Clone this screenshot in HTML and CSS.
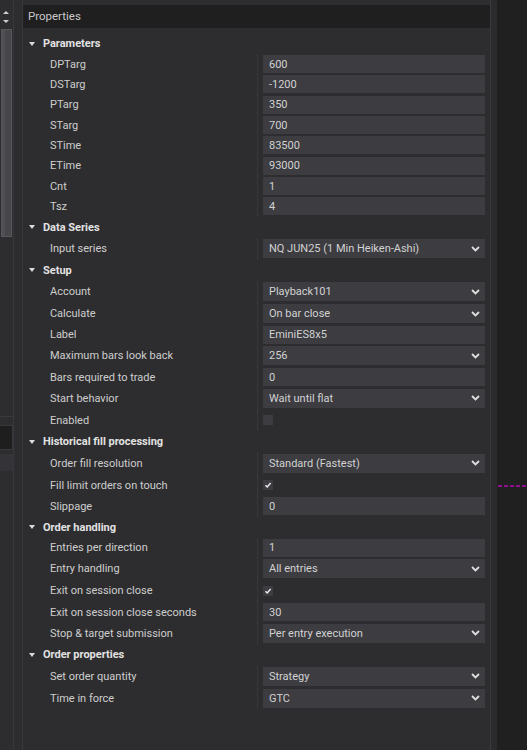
FILE: index.html
```html
<!DOCTYPE html>
<html>
<head>
<meta charset="utf-8">
<link rel="stylesheet" href="styles.css">
</head>
<body>
<div class="app">
  <div class="leftstrip">
    <div class="arrows">
      <span class="arr up"></span>
      <span class="arr down"></span>
    </div>
    <div class="track"><div class="thumb"></div></div>
    <div class="stripfill"></div>
    <div class="darkblock"></div>
    <div class="lightband"></div>
    <div class="stripbottom"></div>
  </div>
  <div class="gap"></div>
  <div class="panel">
    <div class="header">Properties</div>
    <div class="tree">
      <div class="row cat"><span class="tri"></span><span class="cname">Parameters</span></div>
      <div class="row text"><span class="lbl">DPTarg</span><span class="val"><span class="box">600</span></span></div>
      <div class="row text"><span class="lbl">DSTarg</span><span class="val"><span class="box">-1200</span></span></div>
      <div class="row text"><span class="lbl">PTarg</span><span class="val"><span class="box">350</span></span></div>
      <div class="row text"><span class="lbl">STarg</span><span class="val"><span class="box">700</span></span></div>
      <div class="row text"><span class="lbl">STime</span><span class="val"><span class="box">83500</span></span></div>
      <div class="row text"><span class="lbl">ETime</span><span class="val"><span class="box">93000</span></span></div>
      <div class="row text"><span class="lbl">Cnt</span><span class="val"><span class="box">1</span></span></div>
      <div class="row text"><span class="lbl">Tsz</span><span class="val"><span class="box">4</span></span></div>

      <div class="row cat"><span class="tri"></span><span class="cname">Data Series</span></div>
      <div class="row combo"><span class="lbl">Input series</span><span class="val"><span class="box">NQ JUN25 (1 Min Heiken-Ashi)<svg class="chev" width="9" height="6" viewBox="0 0 9 6"><polyline points="1,1 4.5,4.5 8,1"/></svg></span></span></div>

      <div class="row cat"><span class="tri"></span><span class="cname">Setup</span></div>
      <div class="row combo"><span class="lbl">Account</span><span class="val"><span class="box">Playback101<svg class="chev" width="9" height="6" viewBox="0 0 9 6"><polyline points="1,1 4.5,4.5 8,1"/></svg></span></span></div>
      <div class="row combo"><span class="lbl">Calculate</span><span class="val"><span class="box">On bar close<svg class="chev" width="9" height="6" viewBox="0 0 9 6"><polyline points="1,1 4.5,4.5 8,1"/></svg></span></span></div>
      <div class="row text"><span class="lbl">Label</span><span class="val"><span class="box">EminiES8x5</span></span></div>
      <div class="row combo"><span class="lbl">Maximum bars look back</span><span class="val"><span class="box">256<svg class="chev" width="9" height="6" viewBox="0 0 9 6"><polyline points="1,1 4.5,4.5 8,1"/></svg></span></span></div>
      <div class="row text"><span class="lbl">Bars required to trade</span><span class="val"><span class="box">0</span></span></div>
      <div class="row combo"><span class="lbl">Start behavior</span><span class="val"><span class="box">Wait until flat<svg class="chev" width="9" height="6" viewBox="0 0 9 6"><polyline points="1,1 4.5,4.5 8,1"/></svg></span></span></div>
      <div class="row check"><span class="lbl">Enabled</span><span class="val"><span class="cb"></span></span></div>

      <div class="row cat"><span class="tri"></span><span class="cname">Historical fill processing</span></div>
      <div class="row combo"><span class="lbl">Order fill resolution</span><span class="val"><span class="box">Standard (Fastest)<svg class="chev" width="9" height="6" viewBox="0 0 9 6"><polyline points="1,1 4.5,4.5 8,1"/></svg></span></span></div>
      <div class="row check"><span class="lbl">Fill limit orders on touch</span><span class="val"><span class="cb"><svg width="10" height="10" viewBox="0 0 10 10"><polyline points="2.5,5.2 4.2,7 7.6,3"/></svg></span></span></div>
      <div class="row text"><span class="lbl">Slippage</span><span class="val"><span class="box">0</span></span></div>

      <div class="row cat"><span class="tri"></span><span class="cname">Order handling</span></div>
      <div class="row text"><span class="lbl">Entries per direction</span><span class="val"><span class="box">1</span></span></div>
      <div class="row combo"><span class="lbl">Entry handling</span><span class="val"><span class="box">All entries<svg class="chev" width="9" height="6" viewBox="0 0 9 6"><polyline points="1,1 4.5,4.5 8,1"/></svg></span></span></div>
      <div class="row check"><span class="lbl">Exit on session close</span><span class="val"><span class="cb"><svg width="10" height="10" viewBox="0 0 10 10"><polyline points="2.5,5.2 4.2,7 7.6,3"/></svg></span></span></div>
      <div class="row text"><span class="lbl">Exit on session close seconds</span><span class="val"><span class="box">30</span></span></div>
      <div class="row combo"><span class="lbl">Stop &amp; target submission</span><span class="val"><span class="box">Per entry execution<svg class="chev" width="9" height="6" viewBox="0 0 9 6"><polyline points="1,1 4.5,4.5 8,1"/></svg></span></span></div>

      <div class="row cat"><span class="tri"></span><span class="cname">Order properties</span></div>
      <div class="row combo"><span class="lbl">Set order quantity</span><span class="val"><span class="box">Strategy<svg class="chev" width="9" height="6" viewBox="0 0 9 6"><polyline points="1,1 4.5,4.5 8,1"/></svg></span></span></div>
      <div class="row combo"><span class="lbl">Time in force</span><span class="val"><span class="box">GTC<svg class="chev" width="9" height="6" viewBox="0 0 9 6"><polyline points="1,1 4.5,4.5 8,1"/></svg></span></span></div>
    </div>
  </div>
  <div class="rstrip"></div>
  <div class="chart">
    <svg class="dash" width="29" height="2" viewBox="0 0 29 2"><line x1="0" y1="1" x2="29" y2="1"/></svg>
  </div>
</div>
</body>
</html>
```

FILE: styles.css
```css
html, body {
  margin: 0;
  padding: 0;
  background: #2d2d30;
}
body {
  font-family: Roboto, "Noto Sans", sans-serif;
  font-size: 11px;
  color: #cfcfcf;
}
.app {
  display: flex;
  width: 527px;
  height: 750px;
  overflow: hidden;
}
.leftstrip {
  width: 13px;
  border-right: 1px solid #38383c;
  display: flex;
  flex-direction: column;
  padding-top: 5px;
  box-sizing: content-box;
}
.arrows {
  height: 24px;
  display: flex;
  flex-direction: column;
  align-items: center;
  justify-content: center;
  gap: 6px;
}
.arr {
  width: 0;
  height: 0;
  border-left: 3px solid transparent;
  border-right: 3px solid transparent;
}
.arr.up { border-bottom: 3px solid #cfcfcf; }
.arr.down { border-top: 3px solid #cfcfcf; }
.track {
  height: 208px;
  padding: 0 1px;
}
.thumb {
  height: 206px;
  background: #47474b;
  border: 1px solid #58585c;
  box-shadow: inset 3px 0 0 #505054;
}
.stripfill {
  height: 179px;
  border-bottom: 1px solid #3a3a3e;
}
.darkblock {
  margin-top: 8px;
  height: 23px;
  background: #1e1e1f;
  border: 1px solid #38383a;
  border-left: 0;
}
.lightband {
  margin-top: 4px;
  height: 17px;
  background: #343438;
}
.stripbottom { flex: 1; }
.gap {
  width: 8px;
  border-right: 1px solid #38383c;
}
.panel {
  width: 468px;
  display: flex;
  flex-direction: column;
  padding-top: 5px;
}
.header {
  height: 23px;
  background: #1f1f20;
  color: #c8c8c8;
  font-size: 11.5px;
  line-height: 23px;
  padding-left: 5px;
}
.tree {
  margin-top: 5px;
  display: flex;
  flex-direction: column;
}
.row {
  display: flex;
  align-items: stretch;
}
.row.cat { height: 21px; align-items: center; }
.row.text { height: 20.33px; }
.row.combo { height: 22px; }
.row.check { height: 22px; }
.tri {
  width: 0;
  height: 0;
  margin-left: 6px;
  margin-right: 8px;
  border-left: 3.5px solid transparent;
  border-right: 3.5px solid transparent;
  border-top: 4px solid #dcdcdc;
}
.cname {
  font-weight: bold;
  color: #e2e2e2;
  font-size: 11px;
}
.lbl {
  width: 207px;
  padding-left: 27px;
  display: flex;
  align-items: center;
  border-right: 1px solid #38383c;
  color: #cdcdcd;
  white-space: nowrap;
}
.val {
  flex: 1;
  display: flex;
  align-items: center;
  padding-left: 5px;
  padding-right: 5px;
}
.box {
  flex: 1;
  background: #3c3c41;
  color: #d2d2d2;
  display: flex;
  align-items: center;
  justify-content: space-between;
  padding: 0 5px 0 6px;
  box-sizing: border-box;
  white-space: nowrap;
}
.row.text .box { height: 18px; }
.row.combo .box { height: 19px; }
.chev polyline {
  fill: none;
  stroke: #dedede;
  stroke-width: 1.8;
}
.cb {
  width: 10px;
  height: 10px;
  background: #3c3c41;
  display: flex;
}
.cb polyline {
  fill: none;
  stroke: #ececec;
  stroke-width: 1.4;
}
.rstrip {
  width: 6px;
  border-left: 1px solid #3a3a3e;
  background: #2b2b2e;
}
.chart {
  flex: 1;
  background: #202021;
  padding-top: 485px;
}
.dash {
  display: block;
  margin-left: 1px;
}
.dash line {
  stroke: #ff00ff;
  stroke-width: 1;
  stroke-dasharray: 4 2;
}
```
